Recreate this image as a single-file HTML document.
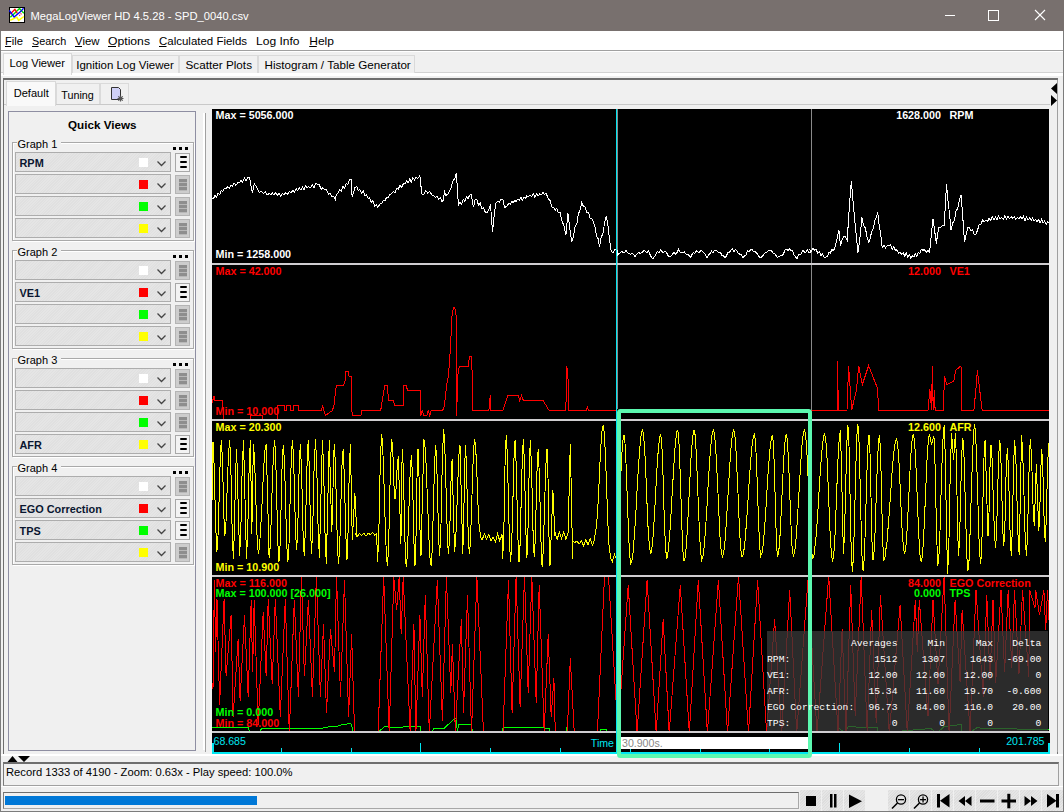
<!DOCTYPE html>
<html><head><meta charset="utf-8">
<style>
*{margin:0;padding:0;box-sizing:border-box}
html,body{width:1064px;height:812px;overflow:hidden;background:#f0f0f0;font-family:"Liberation Sans",sans-serif;font-size:12px;color:#000;position:relative}
.a{position:absolute}
.tab{position:absolute;border:1px solid #d9d9d9;border-bottom:none;background:#f0f0f0}
.gb{position:absolute;left:12px;width:182px;height:99px;border:1px solid #a9a9a9;box-shadow:inset 1px 1px 0 #fff,1px 1px 0 #fff}
.dots{position:absolute;left:160px;top:3px;width:15px;height:3px;background:repeating-linear-gradient(90deg,#000 0 3px,transparent 3px 6px)}
.cb{position:absolute;left:2px;width:156px;height:20px;border:1px solid #adadad;background:#e3e3e3 repeating-linear-gradient(135deg,#e5e5e5 0 1px,#e0e0e0 1px 2px)}
.cb .sq{position:absolute;left:123px;top:5px;width:9px;height:9px}
.cb .ch{position:absolute;left:141px;top:8px;width:9px;height:6px}
.bt{position:absolute;left:162px;width:15px;height:19px;border:1px solid #b4b4b4;background:#cdcdcd}
.bt.on{background:#f3f3f3;border-color:#a8a8a8}
.ln{position:absolute;left:4px;width:7px;height:2px;background:#000;border-radius:1px}
.ln.g{background:#8e8e8e;left:3px;width:8px;height:3px;border-radius:0;box-shadow:0 1px 0 #b8b8b8}
</style></head><body>
<!-- title bar -->
<div class="a" style="left:0;top:0;width:1064px;height:31px;background:#78706e"></div>
<svg class="a" style="left:9px;top:7px" width="16" height="16" viewBox="0 0 16 16">
  <rect x="0.5" y="0.5" width="15" height="15" fill="#fff" stroke="#000"/>
  <polyline points="1.2,13.3 5.9,11.1 7.8,10.3 9.7,13.3 14.9,9.5" fill="none" stroke="#ff0" stroke-width="1.5"/>
  <polyline points="1.3,10.3 5.9,5.9 10.5,1.5 14.9,6.2" fill="none" stroke="#0d0" stroke-width="1.4"/>
  <polyline points="1.3,7 5.9,2.4 8.4,6.5" fill="none" stroke="#f00" stroke-width="1.3"/>
  <polyline points="10.3,8.7 12.7,6.2" fill="none" stroke="#f00" stroke-width="1.2" stroke-dasharray="1 1"/>
  <polyline points="0.3,3.5 5.1,10 11.6,4.6 14.6,1.3" fill="none" stroke="#00f" stroke-width="1.3"/>
</svg>
<svg class="a" style="left:944px;top:9px" width="110" height="13">
  <rect x="1" y="6" width="10" height="1" fill="#fff"/>
  <rect x="44.5" y="1.5" width="10" height="10" fill="none" stroke="#fff"/>
  <line x1="91" y1="1" x2="101" y2="11" stroke="#fff" stroke-width="1.1"/>
  <line x1="101" y1="1" x2="91" y2="11" stroke="#fff" stroke-width="1.1"/>
</svg>
<!-- menu -->
<div class="a" style="left:1px;top:31px;width:1062px;height:19px;background:#fff"></div>
<div class="a" style="left:1px;top:50px;width:1062px;height:1px;background:#a0a0a0"></div>
<div class="a" style="left:1px;top:51px;width:1062px;height:1px;background:#fff"></div>
<!-- main tabs -->
<div class="a" style="left:1px;top:72px;width:1062px;height:1px;background:#d2d2d2"></div><div class="a" style="left:1px;top:73px;width:1062px;height:3px;background:#fff"></div>
<div class="tab" style="left:72px;top:55px;width:107px;height:18px;border-color:#dadada"></div>
<div class="tab" style="left:179px;top:55px;width:79px;height:18px;border-color:#dadada"></div>
<div class="tab" style="left:258px;top:55px;width:157px;height:18px;border-color:#dadada"></div>
<div class="tab" style="left:3px;top:53px;width:69px;height:22px;background:#f9f9f9;border-color:#d9d9d9"></div>
<!-- main panel -->
<div class="a" style="left:3px;top:78px;width:1055px;height:676px;border-top:2px solid #6e6e6e;border-left:1px solid #6e6e6e;border-right:1px solid #7a7a7a"></div>
<!-- sub tabs -->
<div class="tab" style="left:56px;top:83px;width:44px;height:21px;border-color:#dadada"></div>
<div class="tab" style="left:100px;top:83px;width:29px;height:21px;border-color:#dadada"></div>
<div class="a" style="left:4px;top:104px;width:1046px;height:1px;background:#c9c9c9"></div>
<div class="tab" style="left:6px;top:81px;width:50px;height:25px;background:#f9f9f9;border-color:#d9d9d9"></div>
<svg class="a" style="left:110px;top:86px" width="15" height="17" viewBox="0 0 15 17">
  <path d="M1.5 1.5 H8.5 L10.5 3.5 V13.5 H1.5 Z" fill="#cfd0f6" stroke="#333" stroke-width="1"/>
  <path d="M10.5 9.5 V15.5 M7.5 12.5 H13.5 M8.3 10.3 L12.7 14.7 M12.7 10.3 L8.3 14.7" stroke="#555" stroke-width="1.2"/>
  <circle cx="10.5" cy="12.5" r="1.5" fill="#555"/>
</svg>
<!-- left quick views panel -->
<div class="a" style="left:8px;top:111px;width:188px;height:640px;border:1px solid #8e8ea2"></div>
<div class="a" style="left:203px;top:113px;width:2px;height:637px;background:#fff"></div>
<div class="a" style="left:205px;top:113px;width:1px;height:639px;background:#a0a0a0"></div>
<div class="gb" style="top:142px"><div class="a" style="left:4px;top:-6px;width:44px;height:10px;background:#f0f0f0"></div><div class="dots" style="top:4px"></div>
<div class="cb" style="top:9px"><div class="sq" style="background:#fff"></div><svg class="ch" viewBox="0 0 9 6"><polyline points="0.5,0.5 4.5,4.5 8.5,0.5" fill="none" stroke="#444" stroke-width="1.3"/></svg></div>
<div class="bt on" style="top:10px"><div class="ln" style="top:2px"></div><div class="ln" style="top:7px"></div><div class="ln" style="top:12px"></div></div>
<div class="cb" style="top:31px"><div class="sq" style="background:#f00"></div><svg class="ch" viewBox="0 0 9 6"><polyline points="0.5,0.5 4.5,4.5 8.5,0.5" fill="none" stroke="#444" stroke-width="1.3"/></svg></div>
<div class="bt" style="top:32px"><div class="ln g" style="top:3px"></div><div class="ln g" style="top:7px"></div><div class="ln g" style="top:11px"></div></div>
<div class="cb" style="top:53px"><div class="sq" style="background:#0f0"></div><svg class="ch" viewBox="0 0 9 6"><polyline points="0.5,0.5 4.5,4.5 8.5,0.5" fill="none" stroke="#444" stroke-width="1.3"/></svg></div>
<div class="bt" style="top:54px"><div class="ln g" style="top:3px"></div><div class="ln g" style="top:7px"></div><div class="ln g" style="top:11px"></div></div>
<div class="cb" style="top:75px"><div class="sq" style="background:#ff0"></div><svg class="ch" viewBox="0 0 9 6"><polyline points="0.5,0.5 4.5,4.5 8.5,0.5" fill="none" stroke="#444" stroke-width="1.3"/></svg></div>
<div class="bt" style="top:76px"><div class="ln g" style="top:3px"></div><div class="ln g" style="top:7px"></div><div class="ln g" style="top:11px"></div></div>
</div>
<div class="gb" style="top:250px"><div class="a" style="left:4px;top:-6px;width:44px;height:10px;background:#f0f0f0"></div><div class="dots" style="top:4px"></div>
<div class="cb" style="top:9px"><div class="sq" style="background:#fff"></div><svg class="ch" viewBox="0 0 9 6"><polyline points="0.5,0.5 4.5,4.5 8.5,0.5" fill="none" stroke="#444" stroke-width="1.3"/></svg></div>
<div class="bt" style="top:10px"><div class="ln g" style="top:3px"></div><div class="ln g" style="top:7px"></div><div class="ln g" style="top:11px"></div></div>
<div class="cb" style="top:31px"><div class="sq" style="background:#f00"></div><svg class="ch" viewBox="0 0 9 6"><polyline points="0.5,0.5 4.5,4.5 8.5,0.5" fill="none" stroke="#444" stroke-width="1.3"/></svg></div>
<div class="bt on" style="top:32px"><div class="ln" style="top:2px"></div><div class="ln" style="top:7px"></div><div class="ln" style="top:12px"></div></div>
<div class="cb" style="top:53px"><div class="sq" style="background:#0f0"></div><svg class="ch" viewBox="0 0 9 6"><polyline points="0.5,0.5 4.5,4.5 8.5,0.5" fill="none" stroke="#444" stroke-width="1.3"/></svg></div>
<div class="bt" style="top:54px"><div class="ln g" style="top:3px"></div><div class="ln g" style="top:7px"></div><div class="ln g" style="top:11px"></div></div>
<div class="cb" style="top:75px"><div class="sq" style="background:#ff0"></div><svg class="ch" viewBox="0 0 9 6"><polyline points="0.5,0.5 4.5,4.5 8.5,0.5" fill="none" stroke="#444" stroke-width="1.3"/></svg></div>
<div class="bt" style="top:76px"><div class="ln g" style="top:3px"></div><div class="ln g" style="top:7px"></div><div class="ln g" style="top:11px"></div></div>
</div>
<div class="gb" style="top:358px"><div class="a" style="left:4px;top:-6px;width:44px;height:10px;background:#f0f0f0"></div><div class="dots" style="top:4px"></div>
<div class="cb" style="top:9px"><div class="sq" style="background:#fff"></div><svg class="ch" viewBox="0 0 9 6"><polyline points="0.5,0.5 4.5,4.5 8.5,0.5" fill="none" stroke="#444" stroke-width="1.3"/></svg></div>
<div class="bt" style="top:10px"><div class="ln g" style="top:3px"></div><div class="ln g" style="top:7px"></div><div class="ln g" style="top:11px"></div></div>
<div class="cb" style="top:31px"><div class="sq" style="background:#f00"></div><svg class="ch" viewBox="0 0 9 6"><polyline points="0.5,0.5 4.5,4.5 8.5,0.5" fill="none" stroke="#444" stroke-width="1.3"/></svg></div>
<div class="bt" style="top:32px"><div class="ln g" style="top:3px"></div><div class="ln g" style="top:7px"></div><div class="ln g" style="top:11px"></div></div>
<div class="cb" style="top:53px"><div class="sq" style="background:#0f0"></div><svg class="ch" viewBox="0 0 9 6"><polyline points="0.5,0.5 4.5,4.5 8.5,0.5" fill="none" stroke="#444" stroke-width="1.3"/></svg></div>
<div class="bt" style="top:54px"><div class="ln g" style="top:3px"></div><div class="ln g" style="top:7px"></div><div class="ln g" style="top:11px"></div></div>
<div class="cb" style="top:75px"><div class="sq" style="background:#ff0"></div><svg class="ch" viewBox="0 0 9 6"><polyline points="0.5,0.5 4.5,4.5 8.5,0.5" fill="none" stroke="#444" stroke-width="1.3"/></svg></div>
<div class="bt on" style="top:76px"><div class="ln" style="top:2px"></div><div class="ln" style="top:7px"></div><div class="ln" style="top:12px"></div></div>
</div>
<div class="gb" style="top:466px"><div class="a" style="left:4px;top:-6px;width:44px;height:10px;background:#f0f0f0"></div><div class="dots" style="top:4px"></div>
<div class="cb" style="top:9px"><div class="sq" style="background:#fff"></div><svg class="ch" viewBox="0 0 9 6"><polyline points="0.5,0.5 4.5,4.5 8.5,0.5" fill="none" stroke="#444" stroke-width="1.3"/></svg></div>
<div class="bt" style="top:10px"><div class="ln g" style="top:3px"></div><div class="ln g" style="top:7px"></div><div class="ln g" style="top:11px"></div></div>
<div class="cb" style="top:31px"><div class="sq" style="background:#f00"></div><svg class="ch" viewBox="0 0 9 6"><polyline points="0.5,0.5 4.5,4.5 8.5,0.5" fill="none" stroke="#444" stroke-width="1.3"/></svg></div>
<div class="bt on" style="top:32px"><div class="ln" style="top:2px"></div><div class="ln" style="top:7px"></div><div class="ln" style="top:12px"></div></div>
<div class="cb" style="top:53px"><div class="sq" style="background:#0f0"></div><svg class="ch" viewBox="0 0 9 6"><polyline points="0.5,0.5 4.5,4.5 8.5,0.5" fill="none" stroke="#444" stroke-width="1.3"/></svg></div>
<div class="bt on" style="top:54px"><div class="ln" style="top:2px"></div><div class="ln" style="top:7px"></div><div class="ln" style="top:12px"></div></div>
<div class="cb" style="top:75px"><div class="sq" style="background:#ff0"></div><svg class="ch" viewBox="0 0 9 6"><polyline points="0.5,0.5 4.5,4.5 8.5,0.5" fill="none" stroke="#444" stroke-width="1.3"/></svg></div>
<div class="bt" style="top:76px"><div class="ln g" style="top:3px"></div><div class="ln g" style="top:7px"></div><div class="ln g" style="top:11px"></div></div>
</div>
<!-- right arrows -->
<div class="a" style="left:1050px;top:80px;width:8px;height:672px;background:#f0f0f0;border-right:1px solid #a0a0a0"></div>
<svg class="a" style="left:1050px;top:82px" width="8" height="26"><path d="M7 1 V12 L1 6.5 Z M1 13 L7 18.5 L1 24 Z" fill="#000"/></svg>
<!-- status -->
<div class="a" style="left:1px;top:754px;width:1062px;height:2px;background:#fff"></div>
<svg class="a" style="left:6px;top:755px" width="26" height="8"><path d="M1.5 7 L6.5 1 L11.5 7 Z M12 1 H24 L18 7 Z" fill="#000"/></svg>
<div class="a" style="left:3px;top:762px;width:1056px;height:24px;border-top:2px solid #6e6e6e;border-left:1px solid #7a7a7a;border-bottom:1px solid #a0a0a0;border-right:1px solid #a0a0a0"></div>
<div class="a" style="left:1px;top:786px;width:1062px;height:4px;background:#f0f0f0;border-top:1px solid #fff"></div>
<div class="a" style="left:3px;top:792px;width:796px;height:17px;border-top:1px solid #6e6e6e;border-left:1px solid #7a7a7a;border-bottom:1px solid #a8a8a8;border-right:1px solid #a8a8a8"></div>
<div class="a" style="left:5px;top:796px;width:252px;height:9px;background:#0078d7"></div>
<svg class="a" style="left:0;top:0" width="1064" height="812" viewBox="0 0 1064 812">
<defs><clipPath id="c1"><rect x="212" y="109" width="837" height="154"/></clipPath><clipPath id="c2"><rect x="212" y="265" width="837" height="154"/></clipPath><clipPath id="c3"><rect x="212" y="421" width="837" height="154"/></clipPath><clipPath id="c4"><rect x="212" y="577" width="837" height="154"/></clipPath><pattern id="dith" width="2" height="2" patternUnits="userSpaceOnUse"><rect width="2" height="2" fill="#3a3a3a"/><rect width="1" height="1" fill="#2e2e2e"/><rect x="1" y="1" width="1" height="1" fill="#2e2e2e"/></pattern></defs>
<rect x="212" y="109" width="837" height="645" fill="#000"/><rect x="1049" y="733" width="1" height="21" fill="#000"/>
<rect x="811" y="109" width="1" height="310" fill="#8a8a8a"/>
<rect x="617" y="109" width="1" height="300" fill="#8a8a8a"/>
<g clip-path="url(#c1)">
<polyline points="212.0,198.5 213.5,198.6 215.1,195.4 216.6,196.9 218.1,193.3 219.7,194.5 221.2,190.7 222.7,191.5 224.3,188.3 225.8,188.6 227.5,187.0 229.2,188.2 230.9,185.3 232.5,186.0 234.2,183.1 235.9,185.5 237.6,182.7 239.3,182.9 241.0,180.3 242.7,182.2 244.4,177.8 246.1,180.7 247.8,177.2 249.5,177.8 252.4,192.6 254.4,183.7 257.4,188.6 259.4,192.4 261.3,191.2 263.3,193.6 265.3,191.6 267.2,194.7 269.2,193.6 270.8,194.6 272.5,193.1 274.1,195.2 275.8,192.3 277.4,195.3 279.1,193.0 280.7,196.3 282.4,193.6 284.0,195.0 285.8,192.6 287.6,194.0 289.3,191.6 291.1,192.5 292.9,190.6 294.5,191.9 296.1,188.5 297.6,190.5 299.2,187.4 300.8,190.0 302.4,187.1 304.0,189.7 305.5,185.7 307.1,188.0 308.7,186.6 310.5,187.8 312.3,184.4 314.0,187.5 315.8,183.3 317.6,184.7 319.3,184.8 321.1,189.3 322.8,187.5 324.5,189.6 326.5,189.6 328.4,194.1 330.4,193.6 332.0,196.5 333.7,196.1 335.3,199.5 336.3,194.5 337.9,193.6 339.6,189.5 341.2,191.4 342.9,186.4 344.5,188.3 346.2,183.5 347.8,184.7 349.5,179.8 351.1,179.7 352.1,196.5 355.0,187.6 356.7,186.7 358.3,190.3 360.0,189.6 361.6,193.2 363.2,190.7 364.9,195.8 366.5,194.4 368.1,198.4 369.7,197.6 371.3,202.6 372.9,200.4 374.6,206.1 376.2,204.7 377.8,207.4 379.8,204.1 381.7,203.4 383.4,200.1 385.0,200.8 386.6,197.1 388.3,197.8 390.0,194.4 391.6,193.6 393.3,191.4 395.0,192.6 396.7,188.5 398.3,189.0 400.0,185.3 401.7,187.1 403.4,183.7 405.0,183.8 406.6,181.0 408.1,183.1 409.7,178.9 411.3,182.2 412.9,177.6 414.5,180.0 416.0,176.9 417.6,178.7 419.2,176.8 419.9,175.8 421.8,194.0 423.8,194.3 425.8,190.6 427.8,193.2 429.7,191.6 431.7,194.6 433.7,195.9 435.3,197.6 437.0,196.4 438.6,199.2 440.2,197.6 441.9,201.3 443.5,200.5 444.5,189.6 445.5,195.5 447.5,194.6 449.5,191.6 451.2,187.6 452.9,180.9 454.7,178.7 456.4,172.8 458.4,205.0 460.0,202.2 461.6,204.5 463.2,199.3 464.8,201.2 466.4,196.8 468.0,198.8 469.6,195.1 471.2,194.5 473.5,207.4 475.1,199.5 476.8,199.4 478.5,205.2 480.2,203.2 481.9,209.0 483.6,207.8 485.3,212.3 487.0,212.9 488.8,209.5 490.5,204.4 492.5,232.0 494.1,216.1 495.8,203.4 497.6,201.7 499.3,202.2 501.1,199.5 502.8,199.5 504.7,207.4 506.7,206.3 508.7,203.4 510.2,204.1 511.7,201.6 513.2,202.5 514.8,200.4 516.3,201.6 517.8,199.0 519.3,200.4 520.8,197.1 522.3,200.2 523.9,197.2 525.4,198.6 526.9,195.8 528.4,196.5 530.0,195.0 531.6,196.7 533.3,193.6 534.9,197.5 536.5,193.6 538.1,196.1 539.7,193.6 541.3,194.9 543.0,192.6 544.6,194.6 546.2,193.2 548.2,198.8 550.1,200.5 552.1,207.4 553.7,207.5 555.3,210.1 556.8,208.2 558.4,212.8 560.0,212.3 562.0,220.8 563.9,225.9 565.9,235.0 567.9,213.3 569.8,228.3 571.8,241.9 573.4,236.8 575.1,226.6 576.8,224.1 578.4,213.8 580.1,210.0 581.7,202.4 583.4,206.5 585.1,207.1 586.8,212.7 588.4,212.2 590.1,218.4 591.8,218.2 593.5,222.2 595.0,227.3 596.5,236.4 598.0,238.5 599.5,246.8 601.2,237.2 603.0,233.4 604.7,221.9 606.4,216.2 608.0,226.3 609.7,240.9 611.3,251.8 613.2,252.7 615.1,249.4 617.0,250.0 617.0,255.6 618.5,253.8 620.0,253.1 621.5,251.6 623.0,252.2 624.5,252.6 626.0,250.3 627.5,252.5 629.0,253.4 630.5,254.4 632.0,253.5 633.5,254.6 635.0,256.4 636.5,254.5 638.0,252.8 639.5,253.0 641.0,253.0 642.5,252.1 644.0,250.4 645.5,251.4 647.0,252.6 648.5,250.9 650.0,254.6 651.5,257.3 653.0,258.6 654.5,256.7 656.0,253.9 657.5,251.3 659.0,252.6 660.5,250.1 662.0,251.7 663.5,252.6 665.0,251.0 666.5,252.2 668.0,255.8 669.5,256.6 671.0,256.2 672.5,254.2 674.0,252.6 675.5,254.2 677.0,252.7 678.5,249.3 680.0,251.8 681.5,252.7 683.0,252.1 684.5,252.0 686.0,254.2 687.5,254.2 689.0,255.6 690.5,257.6 692.0,254.6 693.5,252.7 695.0,253.2 696.5,250.5 698.0,252.0 699.5,252.0 701.0,250.3 702.5,251.6 704.0,253.2 705.5,254.7 707.0,257.8 708.5,254.7 710.0,253.7 711.5,251.1 713.0,253.1 714.5,250.2 716.0,250.3 717.5,251.1 719.0,253.1 720.5,252.2 722.0,255.7 723.5,255.7 725.0,257.6 726.5,255.8 728.0,252.1 729.5,252.3 731.0,250.2 732.5,248.8 734.0,251.7 735.5,249.4 737.0,251.3 738.5,253.5 740.0,254.2 741.5,255.0 743.0,257.6 744.5,255.9 746.0,255.1 747.5,251.0 749.0,251.7 750.5,249.7 752.0,249.6 753.5,251.8 755.0,251.5 756.5,252.8 758.0,255.0 759.5,257.3 761.0,257.3 762.5,256.1 764.0,254.0 765.5,252.6 767.0,252.2 768.5,250.5 770.0,250.6 771.5,250.7 773.0,253.2 774.5,253.3 776.0,255.5 777.5,257.5 779.0,256.5 780.5,255.9 782.0,255.8 783.5,253.9 785.0,250.0 786.5,249.2 788.0,250.3 789.5,249.0 791.0,250.4 792.5,250.8 794.0,254.7 795.5,256.8 797.0,259.1 798.5,254.3 800.0,254.9 801.5,253.2 803.0,250.0 804.5,252.3 806.0,252.4 807.5,249.6 809.0,253.2 810.5,252.1 810.0,250.2 811.5,251.6 813.0,248.0 814.5,250.2 816.1,249.2 817.7,253.1 819.3,251.8 821.0,255.5 822.6,253.9 824.2,257.0 825.8,257.0 827.3,256.7 828.8,252.2 830.3,253.2 831.8,249.5 833.3,250.8 834.8,248.0 836.8,239.7 838.9,230.0 840.5,245.7 842.1,240.0 843.8,236.7 845.5,236.7 847.2,240.0 849.2,209.3 851.3,181.4 854.0,211.9 856.0,233.0 858.0,252.5 860.0,237.2 861.9,217.5 863.6,225.6 865.3,227.7 867.0,236.9 868.7,242.3 870.2,238.3 871.7,231.4 873.2,229.0 874.7,221.0 876.2,217.8 877.7,211.9 879.2,225.2 880.7,233.9 882.2,248.0 883.9,245.5 885.6,247.9 887.3,245.4 889.0,245.7 890.6,244.6 892.2,249.2 893.8,246.9 895.4,250.4 897.0,249.8 898.6,253.2 900.2,252.5 901.7,254.3 903.2,252.7 904.7,256.1 906.2,252.9 907.8,256.9 909.3,254.7 910.8,258.0 912.3,255.7 913.8,257.0 915.3,253.9 916.8,256.1 918.3,252.4 919.8,254.0 921.3,249.2 922.8,250.2 924.5,249.7 926.2,252.2 927.9,250.5 929.6,252.5 931.3,234.6 933.0,218.7 934.6,230.3 936.3,243.5 938.6,227.7 940.5,227.8 942.3,225.4 944.2,225.4 946.5,184.4 948.0,200.6 949.5,213.7 951.0,230.0 952.7,223.0 954.4,220.2 956.0,211.4 957.7,208.1 959.4,199.9 961.1,195.0 962.8,217.5 964.5,242.3 966.2,234.3 967.9,227.7 969.5,228.0 971.1,231.1 972.6,229.9 974.2,234.6 975.8,234.4 977.5,230.3 979.2,224.3 980.9,224.6 982.6,220.0 984.3,221.7 986.0,219.8 987.6,221.5 989.1,218.0 990.7,220.5 992.3,216.9 993.9,219.9 995.4,217.0 997.0,219.9 998.6,215.8 1000.1,218.9 1001.7,217.5 1003.3,219.4 1004.9,215.8 1006.4,219.1 1008.0,216.2 1009.6,218.7 1011.2,216.8 1012.8,218.4 1014.3,216.7 1015.9,219.3 1017.5,217.5 1019.0,218.7 1020.5,217.0 1022.0,218.9 1023.5,216.3 1025.0,220.5 1026.5,217.0 1028.1,219.9 1029.6,218.0 1031.1,220.3 1032.6,218.0 1034.1,220.5 1035.6,219.8 1037.1,221.5 1038.6,219.5 1040.1,223.1 1041.6,219.2 1043.1,223.2 1044.6,221.0 1046.1,224.6 1047.6,221.7 1049.1,223.2" stroke="#fff" stroke-width="1" fill="none" shape-rendering="crispEdges"/>
</g>
<g clip-path="url(#c2)">
<polyline points="211.0,405.6 214.3,395.7 214.9,400.7 222.8,400.7 222.8,404.0 224.0,421.0 250.0,421.0 250.0,415.5 262.0,415.5 262.0,421.0 277.1,421.0 277.1,405.3 284.0,405.3 284.0,410.5 286.0,410.5 286.0,405.3 290.0,405.3 290.0,410.5 293.0,410.5 293.0,405.3 298.8,405.3 298.8,410.5 321.5,410.5 322.5,405.6 325.5,415.5 332.4,410.5 333.9,405.6 336.3,385.8 343.2,385.8 345.2,380.9 345.8,371.4 348.2,371.4 349.1,376.6 351.1,376.6 352.1,415.5 361.0,415.5 362.0,410.5 380.7,410.5 384.7,385.8 387.2,385.8 388.6,400.3 393.5,400.3 394.5,405.2 403.4,405.2 404.0,385.5 406.4,385.5 407.4,390.4 420.3,390.4 420.9,415.5 422.2,410.5 423.8,415.5 426.8,415.5 428.2,410.5 429.7,415.5 431.3,410.5 442.6,410.5 444.5,405.6 446.5,385.8 448.5,375.0 450.5,347.4 451.8,317.8 453.4,307.5 454.8,307.5 456.4,317.8 456.6,415.5 457.8,375.0 459.3,366.1 468.2,366.1 469.6,356.2 471.6,356.2 472.4,382.9 472.8,410.5 488.9,410.5 490.3,395.1 490.9,410.5 502.8,410.5 507.7,395.7 518.5,395.7 519.5,400.7 521.5,395.7 523.5,400.7 543.2,400.7 549.1,410.5 565.9,410.5 566.5,366.1 567.9,371.0 568.5,410.5 586.6,410.5 587.6,405.6 588.2,410.5 616.2,410.5" stroke="#f00" stroke-width="1" fill="none" shape-rendering="crispEdges"/>
<polyline points="811.3,410.0 837.1,410.0 837.6,361.1 838.3,410.0 847.0,410.0 848.6,365.8 851.7,410.0 856.4,390.5 858.7,365.8 862.3,384.6 868.6,365.8 877.5,388.2 878.7,410.0 928.0,410.0 929.9,389.3 931.6,410.0 932.3,365.8 933.2,410.0 934.4,390.5 935.1,410.0 943.3,410.0 944.5,376.4 946.9,384.6 953.9,381.1 955.5,370.5 961.0,365.8 961.7,410.0 973.9,410.0 975.8,390.5 977.4,370.5 982.1,410.0 1050.0,410.0" stroke="#f00" stroke-width="1" fill="none" shape-rendering="crispEdges"/>
</g>
<g clip-path="url(#c3)">
<polyline points="212.0,500.8 213.0,441.7 214.3,469.3 215.6,524.4 216.9,552.0 218.0,535.6 219.2,495.9 220.3,456.1 221.4,439.7 222.6,463.8 223.7,512.1 224.8,536.3 226.0,522.1 227.2,488.0 228.5,453.8 229.7,439.7 230.9,469.5 232.1,528.4 233.3,558.9 234.4,531.3 235.5,476.2 236.6,448.6 238.1,502.3 239.6,556.0 240.9,526.9 242.2,468.8 243.5,439.7 245.0,499.3 246.5,558.9 247.8,529.1 249.1,469.5 250.4,439.7 251.8,534.3 253.4,443.6 254.6,459.8 255.8,498.8 257.1,537.8 258.3,554.0 259.4,548.5 260.5,530.7 261.7,511.1 262.8,486.5 263.9,464.4 265.1,449.1 266.2,443.6 267.7,500.8 269.1,558.0 270.2,546.7 271.3,517.1 272.4,480.5 273.6,451.0 274.7,439.7 275.7,457.6 276.8,500.8 277.9,544.0 279.0,561.9 280.1,544.7 281.2,503.3 282.2,461.8 283.3,444.6 284.5,461.8 285.6,503.3 286.7,544.7 287.9,561.9 289.0,544.0 290.1,500.8 291.3,457.6 292.4,439.7 293.5,455.8 294.6,494.9 295.6,533.9 296.7,550.1 297.9,523.5 299.1,470.2 300.3,443.6 301.6,471.7 302.9,527.9 304.2,556.0 305.5,526.9 306.9,468.8 308.2,439.7 309.3,468.3 310.4,525.4 311.5,554.0 312.8,525.2 314.1,467.5 315.5,438.7 316.8,468.5 318.1,527.6 319.4,558.0 320.9,498.8 322.4,439.7 323.7,470.7 325.0,532.7 326.3,563.9 327.8,501.8 329.3,439.7 330.5,486.0 331.8,532.3 333.0,488.0 334.2,443.6 335.3,461.2 336.4,503.7 337.4,546.3 338.5,563.9 339.7,547.1 340.8,506.7 341.9,466.3 343.1,449.5 344.4,477.1 345.7,532.3 347.0,559.9 348.1,530.9 349.2,472.7 350.4,443.6 352.3,540.2 353.6,516.6 354.9,492.9 356.9,536.3 355.0,532.7 357.2,536.5 359.4,533.5 361.6,535.6 363.8,533.1 366.0,536.1 368.2,533.3 370.4,534.6 372.6,532.3 374.8,535.4 376.6,534.0 377.6,562.0 378.9,530.0 380.2,466.0 381.5,434.0 382.5,442.8 383.5,467.0 384.5,500.0 385.5,533.4 386.5,557.2 387.5,566.0 388.6,547.4 389.6,502.5 390.7,457.6 391.8,439.0 392.9,454.0 393.9,484.0 395.0,499.0 396.1,488.2 397.2,466.8 398.3,456.0 399.6,500.0 400.9,544.0 402.2,449.0 403.2,466.3 404.2,508.0 405.2,549.7 406.2,567.0 407.3,556.3 408.3,528.5 409.4,493.7 410.4,465.7 411.5,455.0 412.7,482.8 413.8,539.5 415.0,566.0 416.0,536.8 417.0,478.2 418.0,449.0 419.0,475.8 420.0,530.0 421.0,556.0 422.4,497.5 423.9,439.0 424.9,445.3 426.0,462.9 427.0,488.4 428.1,516.6 429.1,542.1 430.2,560.8 431.2,566.0 432.3,548.3 433.4,505.5 434.6,462.7 435.7,445.0 436.7,461.3 437.7,500.5 438.7,539.7 439.7,556.0 441.0,524.2 442.3,460.8 443.6,429.0 444.6,440.9 445.6,472.2 446.6,510.8 447.6,544.0 448.6,554.0 449.8,530.2 450.9,482.8 452.1,459.0 453.3,505.5 454.5,552.0 455.6,541.8 456.7,515.0 457.8,482.0 458.9,455.2 460.0,445.0 461.4,499.5 462.8,554.0 464.1,499.5 465.3,445.0 466.3,461.0 467.3,499.5 468.3,538.0 469.3,554.0 470.4,543.0 471.4,514.3 472.5,478.7 473.5,450.0 474.6,439.0 475.7,447.9 476.8,471.1 477.8,499.9 478.9,523.1 480.0,532.0 480.0,535.9 482.2,539.8 484.4,533.6 486.6,539.1 488.8,534.6 491.0,541.1 493.2,537.3 495.4,541.8 497.6,533.9 499.8,541.0 502.0,534.6 502.7,559.0 503.9,528.0 505.0,466.0 506.2,435.0 507.3,453.6 508.4,498.5 509.5,543.4 510.6,562.0 511.7,544.1 512.9,501.0 514.0,457.9 515.1,440.0 516.4,470.5 517.7,533.1 519.0,562.0 520.1,544.0 521.2,500.5 522.3,457.0 523.4,439.0 524.6,468.8 525.7,526.4 526.9,558.0 528.0,528.5 529.2,469.5 530.3,440.0 531.6,469.2 532.9,527.8 534.2,557.0 535.2,541.2 536.2,503.0 537.2,464.8 538.2,449.0 539.5,478.5 540.8,537.6 542.1,567.0 543.3,549.7 544.5,508.0 545.8,466.3 547.0,449.0 548.0,478.2 549.0,536.8 550.0,566.0 551.5,528.0 552.9,490.0 553.9,513.0 554.9,536.0 554.9,532.2 557.1,539.7 559.3,532.2 561.5,538.8 563.7,531.9 565.9,539.2 568.1,532.7 570.3,443.6 571.5,501.3 572.6,559.0 572.6,540.6 574.8,542.6 577.0,541.0 579.2,543.9 581.4,541.1 583.6,545.8 585.8,539.3 588.0,545.0 590.2,539.0 592.4,545.2 594.6,539.5 595.3,532.3 596.4,527.0 597.6,512.1 598.7,490.5 599.8,466.7 600.9,445.1 602.1,430.2 603.2,424.9 604.4,433.5 605.5,457.2 606.7,489.4 607.8,521.7 609.0,545.4 610.1,554.0 610.1,557.5 612.3,561.7 614.5,554.5 616.0,558.0 617.1,551.9 618.3,534.8 619.4,510.1 620.5,482.6 621.6,457.9 622.8,440.8 623.9,434.7 625.0,443.3 626.2,467.0 627.3,499.2 628.5,531.7 629.6,555.2 630.8,563.8 631.9,561.1 632.9,554.0 634.0,540.7 635.1,524.6 636.2,506.3 637.2,487.3 638.3,469.0 639.4,452.9 640.5,440.4 641.5,432.5 642.6,429.8 643.7,435.9 644.9,453.2 646.0,478.1 647.1,505.7 648.2,530.6 649.4,545.7 650.5,554.0 651.5,551.1 652.5,543.7 653.6,529.2 654.6,512.5 655.6,493.9 656.6,475.3 657.6,458.6 658.7,445.3 659.7,436.7 660.7,433.8 661.9,445.7 663.1,477.0 664.2,515.7 665.4,545.7 666.6,558.9 667.6,556.3 668.6,546.5 669.6,536.6 670.6,521.2 671.6,503.5 672.7,485.2 673.7,467.5 674.7,452.1 675.7,440.0 676.7,432.4 677.7,429.8 678.8,438.6 679.8,462.6 680.9,495.3 681.9,527.0 683.0,552.1 684.0,560.9 685.0,557.7 686.0,549.5 687.1,533.9 688.1,515.6 689.1,495.4 690.1,475.1 691.1,456.8 692.2,442.3 693.2,433.0 694.2,429.8 695.3,436.2 696.3,454.3 697.4,480.4 698.5,509.3 699.6,535.4 700.6,552.0 701.7,559.9 702.8,557.3 703.8,550.8 704.9,537.4 706.0,521.9 707.1,504.1 708.1,485.6 709.2,467.8 710.3,452.3 711.4,440.1 712.4,432.4 713.5,429.8 714.6,434.6 715.7,448.4 716.8,469.0 718.0,493.3 719.1,517.7 720.2,540.7 721.3,552.1 722.4,556.9 723.4,554.3 724.5,546.8 725.5,535.0 726.5,519.7 727.6,502.4 728.6,484.3 729.7,467.0 730.7,451.7 731.7,439.9 732.8,432.4 733.8,429.8 734.8,434.6 735.9,448.4 736.9,469.0 738.0,493.3 739.0,517.7 740.0,537.7 741.1,552.1 742.1,556.9 743.1,554.8 744.2,548.5 745.2,538.9 746.2,526.1 747.3,511.3 748.3,495.4 749.3,479.4 750.4,464.6 751.4,451.8 752.4,442.0 753.5,435.9 754.5,433.8 755.5,442.0 756.6,464.3 757.6,494.8 758.7,525.4 759.8,547.7 760.8,555.9 761.9,553.4 762.9,547.2 764.0,535.0 765.1,520.5 766.2,503.9 767.2,486.7 768.3,470.1 769.4,455.6 770.5,444.3 771.5,437.2 772.6,434.7 773.6,446.4 774.6,476.9 775.6,514.7 776.6,546.6 777.6,556.9 778.7,552.2 779.8,539.5 780.9,518.9 782.0,495.4 783.1,471.8 784.2,451.8 785.3,438.5 786.4,433.8 787.5,442.0 788.7,464.3 789.8,494.8 791.0,525.4 792.1,547.7 793.3,555.9 794.3,553.3 795.4,546.6 796.4,534.1 797.4,519.0 798.4,501.8 799.5,483.9 800.5,466.7 801.5,451.6 802.5,439.8 803.6,432.4 804.6,429.8 805.6,434.7 806.7,448.6 807.7,469.3 808.8,493.8 809.8,518.4 810.8,537.0 811.9,553.0 812.9,557.9 814.0,555.4 815.0,546.3 816.1,536.5 817.2,521.6 818.3,504.7 819.3,487.0 820.4,470.1 821.5,455.2 822.6,443.7 823.6,436.3 824.7,433.8 825.8,440.1 827.0,457.9 828.1,483.6 829.2,512.0 830.3,537.7 831.5,554.2 832.6,561.8 833.7,555.3 834.9,538.2 836.0,510.5 837.1,481.1 838.2,454.6 839.4,436.3 840.5,429.8 842.0,491.8 843.4,553.9 844.5,535.0 845.6,489.4 846.8,443.8 847.9,424.9 849.0,446.4 850.1,498.2 851.2,550.1 852.3,571.6 853.4,557.5 854.5,520.6 855.6,474.9 856.7,438.0 857.8,423.9 858.9,437.9 859.9,474.6 861.0,520.0 862.0,555.7 863.1,570.7 864.3,557.7 865.5,523.7 866.6,481.7 867.8,447.7 869.0,434.7 870.0,453.0 871.0,497.2 872.0,541.5 873.0,559.8 874.1,551.4 875.2,528.9 876.2,497.2 877.3,466.0 878.4,443.1 879.5,434.7 880.6,453.0 881.6,497.2 882.7,541.5 883.8,559.8 884.9,557.7 885.9,549.3 887.0,542.1 888.1,527.3 889.1,514.9 890.2,499.2 891.3,483.6 892.3,469.0 893.4,456.4 894.5,446.8 895.5,440.8 896.6,438.7 897.7,444.4 898.9,460.4 900.0,483.5 901.1,509.1 902.2,532.2 903.4,547.0 904.5,553.9 905.6,549.3 906.7,537.2 907.8,516.8 908.9,493.9 910.0,470.9 911.1,451.4 912.2,438.4 913.3,433.8 914.4,440.1 915.6,457.9 916.7,483.6 917.8,512.0 918.9,537.7 920.1,556.4 921.2,561.8 922.2,556.9 923.3,543.9 924.3,522.3 925.4,497.8 926.4,473.3 927.4,452.5 928.5,438.7 929.5,433.8 930.5,439.4 931.5,445.0 932.7,440.4 933.9,435.7 935.2,468.2 936.5,532.2 937.8,565.7 938.9,556.3 940.0,530.6 941.0,495.3 942.1,460.1 943.2,434.3 944.3,424.9 945.4,462.1 946.6,536.2 947.7,573.6 949.0,538.4 950.3,468.0 951.6,432.8 953.5,460.0 954.5,446.4 955.5,432.8 956.5,463.6 957.5,525.1 958.5,555.9 959.6,538.6 960.6,496.8 961.7,455.0 962.8,437.7 963.8,450.4 964.8,483.7 965.9,524.7 966.9,557.8 967.9,570.7 969.0,560.9 970.1,532.1 971.2,497.3 972.4,460.6 973.5,433.7 974.6,423.9 975.6,433.3 976.6,458.9 977.7,493.8 978.7,530.8 979.7,554.4 980.7,563.8 981.8,545.6 982.9,501.8 984.0,457.9 985.1,439.7 986.5,487.9 988.0,536.2 989.0,513.3 990.0,467.5 991.0,444.6 992.1,459.7 993.2,496.3 994.4,532.9 995.5,548.0 996.6,532.1 997.6,493.9 998.7,455.6 999.8,439.7 1000.8,455.3 1001.8,492.8 1002.8,530.4 1003.8,546.0 1005.0,521.6 1006.1,472.9 1007.3,448.5 1008.3,464.2 1009.3,502.2 1010.3,540.2 1011.3,555.9 1012.4,526.9 1013.5,468.8 1014.6,439.7 1015.8,456.6 1016.9,497.3 1018.1,538.0 1019.2,554.9 1020.4,494.8 1021.5,434.7 1022.7,452.4 1024.0,495.3 1025.2,538.2 1026.4,555.9 1027.4,538.7 1028.4,497.3 1029.4,455.9 1030.4,438.7 1031.7,460.6 1033.0,504.4 1034.3,526.3 1035.3,495.3 1036.3,464.3 1037.5,497.8 1038.8,531.3 1039.8,510.8 1040.8,469.9 1041.8,449.5 1042.9,472.6 1044.1,519.0 1045.2,542.1 1046.4,517.2 1047.5,467.5 1048.7,442.6" stroke="#ff0" stroke-width="1" fill="none" shape-rendering="crispEdges"/>
</g>
<g clip-path="url(#c4)">
<polyline points="211.0,727.6 248.2,727.6 250.2,733.0 258.2,733.0 262.2,728.2 322.4,728.2 330.5,726.6 336.5,726.6 342.5,724.6 350.6,723.6 351.6,724.6 353.0,733.0 377.1,733.0 385.1,726.2 389.2,727.0 403.2,727.0 404.2,726.2 420.3,726.2 420.7,733.0 430.3,733.0 434.3,728.2 444.4,728.2 454.4,718.6 456.4,718.6 457.4,733.0 458.4,724.6 471.5,724.6 472.5,733.0 502.0,733.0 503.0,728.2 508.1,727.0 543.2,727.0 545.2,728.2 549.2,728.2 549.8,733.0 566.3,733.0 566.3,727.6 567.9,733.0 600.0,733.0 600.4,729.2 606.0,729.2 606.9,733.0 837.1,733.0 838.1,727.5 845.1,733.0 848.1,726.5 853.1,726.5 858.2,727.5 877.2,727.5 878.2,733.0 931.0,728.5 937.0,733.0 944.1,726.5 961.1,724.5 962.1,733.0 969.1,733.0 977.2,727.5 983.2,728.5 1049.4,729.5" stroke="#0f0" stroke-width="1" fill="none" shape-rendering="crispEdges"/>
<polyline points="211.6,680.4 213.0,688.5 214.4,580.0 215.6,652.3 217.0,599.1 219.6,704.5 224.1,599.1 226.1,676.4 231.1,615.2 233.1,716.6 238.1,639.3 240.1,700.5 244.5,615.2 248.2,696.5 251.2,600.1 252.6,672.4 254.2,600.1 258.2,724.6 263.2,612.2 266.2,676.4 268.2,599.1 272.2,684.4 275.3,599.1 280.3,716.6 285.3,599.1 289.3,733.0 294.3,600.1 298.4,696.5 301.4,576.0 304.4,676.4 308.4,600.1 312.4,696.5 316.4,577.0 320.4,696.5 323.5,624.2 326.5,712.6 330.5,629.2 334.5,672.4 336.5,576.0 340.5,696.5 344.5,580.0 348.6,716.6 351.6,634.2 354.6,733.0 355.0,733.0 378.1,733.0 383.7,577.0 389.2,733.0 393.8,577.0 396.6,610.2 399.2,577.0 401.2,634.2 403.2,577.0 410.2,733.0 413.9,624.2 415.9,733.0 419.9,615.2 422.3,696.5 425.3,595.1 429.3,733.0 437.3,580.0 442.4,720.6 446.4,577.0 450.8,692.5 452.4,644.3 455.4,733.0 458.4,672.4 461.4,619.2 463.5,712.6 467.5,595.1 471.5,733.0 476.9,577.0 483.5,733.0 503.0,733.0 508.5,580.0 512.1,712.6 516.1,576.0 520.1,706.5 524.5,576.0 528.2,692.5 531.8,576.0 536.2,702.5 539.2,585.0 544.2,733.0 548.2,634.2 551.2,716.6 553.9,678.4 555.3,733.0 567.3,733.0 570.3,658.3 574.3,733.0 597.4,733.0 604.5,576.0 608.5,576.0 618.0,733.0 628.2,585.0 637.1,733.0 647.1,580.0 656.2,733.0 663.2,619.2 669.2,733.0 680.3,585.0 689.3,733.0 698.3,580.0 707.4,733.0 718.4,580.0 727.5,733.0 738.5,576.0 748.5,733.0 757.6,580.0 766.6,733.0 774.6,619.2 781.7,733.0 789.7,590.0 796.7,733.0 808.0,580.0 817.0,733.0 828.7,576.0 838.1,733.0 842.1,629.2 846.1,733.0 850.7,585.0 855.2,716.4 861.2,576.0 867.2,733.0 871.6,610.1 876.2,722.5 880.4,595.1 889.3,733.0 900.1,605.1 907.3,733.0 915.3,600.1 917.3,652.0 919.3,600.1 928.0,716.4 933.0,600.1 938.0,684.3 944.1,576.0 949.1,733.0 955.1,600.1 960.1,682.3 962.1,610.1 970.1,733.0 976.0,590.0 983.2,697.0 986.8,595.0 990.0,680.0 993.0,600.0 995.7,683.0 1001.0,590.0 1004.6,672.0 1008.2,590.0 1011.8,668.0 1014.5,590.0 1019.0,674.0 1022.5,590.0 1028.8,677.0 1029.6,590.0 1035.0,608.0 1035.7,590.0 1039.5,615.0 1043.9,590.0 1045.7,630.0 1047.5,590.0 1049.0,620.0" stroke="#f00" stroke-width="1" fill="none" shape-rendering="crispEdges"/>
</g>
<rect x="212" y="263" width="837" height="2" fill="#cfcdd0"/>
<rect x="212" y="419" width="837" height="2" fill="#cfcdd0"/>
<rect x="212" y="575" width="837" height="2" fill="#cfcdd0"/>
<rect x="212" y="731" width="837" height="2" fill="#cfcdd0"/>
<rect x="767" y="631" width="281" height="100" fill="#373737" fill-opacity="0.78"/>
<rect x="616" y="109" width="1" height="645" fill="#00e5f0"/>
<rect x="212" y="752" width="838" height="2" fill="#00e5f0"/>
<rect x="212" y="743" width="2" height="10" fill="#00e5f0"/>
<rect x="1048" y="743" width="2" height="10" fill="#00e5f0"/>
<rect x="281" y="748" width="1" height="5" fill="#00e5f0"/>
<rect x="351" y="748" width="1" height="5" fill="#00e5f0"/>
<rect x="420" y="743" width="1" height="10" fill="#00e5f0"/>
<rect x="490" y="748" width="1" height="5" fill="#00e5f0"/>
<rect x="560" y="748" width="1" height="5" fill="#00e5f0"/>
<rect x="630" y="748" width="1" height="5" fill="#00e5f0"/>
<rect x="700" y="748" width="1" height="5" fill="#00e5f0"/>
<rect x="769" y="748" width="1" height="5" fill="#00e5f0"/>
<rect x="839" y="743" width="1" height="10" fill="#00e5f0"/>
<rect x="909" y="748" width="1" height="5" fill="#00e5f0"/>
<rect x="979" y="748" width="1" height="5" fill="#00e5f0"/>
<rect x="621" y="737" width="188" height="12" fill="#fff"/>
<rect x="619" y="411" width="191" height="345" rx="1.5" fill="none" stroke="#5cf8b0" stroke-width="4"/>
</svg>
<svg class="a" style="left:0;top:0" width="1064" height="812" font-family="Liberation Sans">
<text x="215.5" y="119" fill="#fff" font-size="10.75" font-weight="bold" text-anchor="start">Max = 5056.000</text>
<text x="215.5" y="258" fill="#fff" font-size="10.75" font-weight="bold" text-anchor="start">Min = 1258.000</text>
<text x="941" y="119" fill="#fff" font-size="10.75" font-weight="bold" text-anchor="end">1628.000</text>
<text x="949.5" y="119" fill="#fff" font-size="10.75" font-weight="bold" text-anchor="start">RPM</text>
<text x="215.5" y="275" fill="#f00" font-size="10.75" font-weight="bold" text-anchor="start">Max = 42.000</text>
<text x="215.5" y="414.5" fill="#f00" font-size="10.75" font-weight="bold" text-anchor="start">Min = 10.000</text>
<text x="941" y="275" fill="#f00" font-size="10.75" font-weight="bold" text-anchor="end">12.000</text>
<text x="949.5" y="275" fill="#f00" font-size="10.75" font-weight="bold" text-anchor="start">VE1</text>
<text x="215.5" y="431" fill="#ff0" font-size="10.75" font-weight="bold" text-anchor="start">Max = 20.300</text>
<text x="215.5" y="570.7" fill="#ff0" font-size="10.75" font-weight="bold" text-anchor="start">Min = 10.900</text>
<text x="941" y="431" fill="#ff0" font-size="10.75" font-weight="bold" text-anchor="end">12.600</text>
<text x="949.5" y="431" fill="#ff0" font-size="10.75" font-weight="bold" text-anchor="start">AFR</text>
<text x="215.5" y="586.7" fill="#f00" font-size="10.75" font-weight="bold" text-anchor="start">Max = 116.000</text>
<text x="215.5" y="597.2" fill="#0f0" font-size="10.75" font-weight="bold" text-anchor="start">Max = 100.000 [26.000]</text>
<text x="215.5" y="715.6" fill="#0f0" font-size="10.75" font-weight="bold" text-anchor="start">Min = 0.000</text>
<text x="215.5" y="726.6" fill="#f00" font-size="10.75" font-weight="bold" text-anchor="start">Min = 84.000</text>
<text x="941" y="586.7" fill="#f00" font-size="10.75" font-weight="bold" text-anchor="end">84.000</text>
<text x="949.5" y="586.7" fill="#f00" font-size="10.75" font-weight="bold" text-anchor="start">EGO Correction</text>
<text x="941" y="597.2" fill="#0f0" font-size="10.75" font-weight="bold" text-anchor="end">0.000</text>
<text x="949.5" y="597.2" fill="#0f0" font-size="10.75" font-weight="bold" text-anchor="start">TPS</text>
<text x="213.5" y="745" fill="#00e5f0" font-size="10.6" font-weight="normal" text-anchor="start">68.685</text>
<text x="1044.5" y="745" fill="#00e5f0" font-size="10.6" font-weight="normal" text-anchor="end">201.785</text>
<text x="614" y="747" fill="#00e5f0" font-size="10.6" font-weight="normal" text-anchor="end">Time</text>
<text x="622" y="747" fill="#888" font-size="10.6" font-weight="normal" text-anchor="start">30.900s.</text>
<text x="897.5" y="646" font-family="Liberation Mono" font-size="9.7" fill="#fff" text-anchor="end">Averages</text>
<text x="945" y="646" font-family="Liberation Mono" font-size="9.7" fill="#fff" text-anchor="end">Min</text>
<text x="993.2" y="646" font-family="Liberation Mono" font-size="9.7" fill="#fff" text-anchor="end">Max</text>
<text x="1041.3" y="646" font-family="Liberation Mono" font-size="9.7" fill="#fff" text-anchor="end">Delta</text>
<text x="767" y="662" font-family="Liberation Mono" font-size="9.7" fill="#fff">RPM:</text>
<text x="897.5" y="662" font-family="Liberation Mono" font-size="9.7" fill="#fff" text-anchor="end">1512</text>
<text x="945" y="662" font-family="Liberation Mono" font-size="9.7" fill="#fff" text-anchor="end">1307</text>
<text x="993.2" y="662" font-family="Liberation Mono" font-size="9.7" fill="#fff" text-anchor="end">1643</text>
<text x="1041.3" y="662" font-family="Liberation Mono" font-size="9.7" fill="#fff" text-anchor="end">-69.00</text>
<text x="767" y="678" font-family="Liberation Mono" font-size="9.7" fill="#fff">VE1:</text>
<text x="897.5" y="678" font-family="Liberation Mono" font-size="9.7" fill="#fff" text-anchor="end">12.00</text>
<text x="945" y="678" font-family="Liberation Mono" font-size="9.7" fill="#fff" text-anchor="end">12.00</text>
<text x="993.2" y="678" font-family="Liberation Mono" font-size="9.7" fill="#fff" text-anchor="end">12.00</text>
<text x="1041.3" y="678" font-family="Liberation Mono" font-size="9.7" fill="#fff" text-anchor="end">0</text>
<text x="767" y="694" font-family="Liberation Mono" font-size="9.7" fill="#fff">AFR:</text>
<text x="897.5" y="694" font-family="Liberation Mono" font-size="9.7" fill="#fff" text-anchor="end">15.34</text>
<text x="945" y="694" font-family="Liberation Mono" font-size="9.7" fill="#fff" text-anchor="end">11.60</text>
<text x="993.2" y="694" font-family="Liberation Mono" font-size="9.7" fill="#fff" text-anchor="end">19.70</text>
<text x="1041.3" y="694" font-family="Liberation Mono" font-size="9.7" fill="#fff" text-anchor="end">-0.600</text>
<text x="767" y="710" font-family="Liberation Mono" font-size="9.7" fill="#fff">EGO Correction:</text>
<text x="897.5" y="710" font-family="Liberation Mono" font-size="9.7" fill="#fff" text-anchor="end">96.73</text>
<text x="945" y="710" font-family="Liberation Mono" font-size="9.7" fill="#fff" text-anchor="end">84.00</text>
<text x="993.2" y="710" font-family="Liberation Mono" font-size="9.7" fill="#fff" text-anchor="end">116.0</text>
<text x="1041.3" y="710" font-family="Liberation Mono" font-size="9.7" fill="#fff" text-anchor="end">20.00</text>
<text x="767" y="726" font-family="Liberation Mono" font-size="9.7" fill="#fff">TPS:</text>
<text x="897.5" y="726" font-family="Liberation Mono" font-size="9.7" fill="#fff" text-anchor="end">0</text>
<text x="945" y="726" font-family="Liberation Mono" font-size="9.7" fill="#fff" text-anchor="end">0</text>
<text x="993.2" y="726" font-family="Liberation Mono" font-size="9.7" fill="#fff" text-anchor="end">0</text>
<text x="1041.3" y="726" font-family="Liberation Mono" font-size="9.7" fill="#fff" text-anchor="end">0</text>
</svg>
<div class="a" style="left:800px;top:790px;width:21px;height:21px;background:#e2e2e2 repeating-linear-gradient(135deg,#e6e6e6 0 1px,#dddddd 1px 2px)"></div>
<div class="a" style="left:822px;top:790px;width:21px;height:21px;background:#e2e2e2 repeating-linear-gradient(135deg,#e6e6e6 0 1px,#dddddd 1px 2px)"></div>
<div class="a" style="left:844px;top:790px;width:21px;height:21px;background:#e2e2e2 repeating-linear-gradient(135deg,#e6e6e6 0 1px,#dddddd 1px 2px)"></div>
<div class="a" style="left:888px;top:790px;width:21px;height:21px;background:#e2e2e2 repeating-linear-gradient(135deg,#e6e6e6 0 1px,#dddddd 1px 2px)"></div>
<div class="a" style="left:910px;top:790px;width:21px;height:21px;background:#e2e2e2 repeating-linear-gradient(135deg,#e6e6e6 0 1px,#dddddd 1px 2px)"></div>
<div class="a" style="left:932px;top:790px;width:21px;height:21px;background:#e2e2e2 repeating-linear-gradient(135deg,#e6e6e6 0 1px,#dddddd 1px 2px)"></div>
<div class="a" style="left:954px;top:790px;width:21px;height:21px;background:#e2e2e2 repeating-linear-gradient(135deg,#e6e6e6 0 1px,#dddddd 1px 2px)"></div>
<div class="a" style="left:976px;top:790px;width:21px;height:21px;background:#e2e2e2 repeating-linear-gradient(135deg,#e6e6e6 0 1px,#dddddd 1px 2px)"></div>
<div class="a" style="left:998px;top:790px;width:21px;height:21px;background:#e2e2e2 repeating-linear-gradient(135deg,#e6e6e6 0 1px,#dddddd 1px 2px)"></div>
<div class="a" style="left:1020px;top:790px;width:21px;height:21px;background:#e2e2e2 repeating-linear-gradient(135deg,#e6e6e6 0 1px,#dddddd 1px 2px)"></div>
<div class="a" style="left:1042px;top:790px;width:21px;height:21px;background:#e2e2e2 repeating-linear-gradient(135deg,#e6e6e6 0 1px,#dddddd 1px 2px)"></div>
<svg class="a" style="left:0;top:0" width="1064" height="812">
<rect x="806" y="796" width="10" height="10" fill="#000"/>
<rect x="830" y="794" width="2.5" height="13.5" fill="#000"/><rect x="834" y="794" width="2.5" height="13.5" fill="#000"/>
<path d="M849 794.5 L862 801.2 L849 808 Z" fill="#000"/>
<circle cx="901" cy="799.5" r="4.6" fill="none" stroke="#000" stroke-width="1.3"/><rect x="898" y="799" width="6" height="1.3" fill="#000"/><line x1="897.5" y1="803" x2="892" y2="808.5" stroke="#000" stroke-width="1.6"/>
<circle cx="923" cy="799.5" r="4.6" fill="none" stroke="#000" stroke-width="1.3"/><rect x="920" y="799" width="6" height="1.3" fill="#000"/><rect x="922.4" y="796.5" width="1.3" height="6" fill="#000"/><line x1="919.5" y1="803" x2="914" y2="808.5" stroke="#000" stroke-width="1.6"/>
<rect x="937" y="794" width="3" height="13.5" fill="#000"/><path d="M949.5 794 L940 800.8 L949.5 807.5 Z" fill="#000"/>
<path d="M965 796 L958.5 801 L965 806 Z M971.5 796 L965 801 L971.5 806 Z" fill="#000"/>
<rect x="980" y="799.5" width="14.5" height="3" fill="#000"/>
<rect x="1001.5" y="799.5" width="14.5" height="3" fill="#000"/><rect x="1007.3" y="793.8" width="3" height="14.5" fill="#000"/>
<path d="M1024.5 796 L1031 801 L1024.5 806 Z M1031 796 L1037.5 801 L1031 806 Z" fill="#000"/>
<path d="M1047 794 L1056.5 800.8 L1047 807.5 Z" fill="#000"/><rect x="1056" y="794" width="3" height="13.5" fill="#000"/>
</svg>

<svg class="a" style="left:0;top:0" width="1064" height="812" font-family="Liberation Sans"><text x="17.5" y="147.5" font-size="11">Graph 1</text>
<text x="19.5" y="167" font-size="10.9" font-weight="bold" fill="#0a1630">RPM</text>
<text x="17.5" y="255.5" font-size="11">Graph 2</text>
<text x="19.5" y="297" font-size="10.9" font-weight="bold" fill="#0a1630">VE1</text>
<text x="17.5" y="363.5" font-size="11">Graph 3</text>
<text x="19.5" y="449" font-size="10.9" font-weight="bold" fill="#0a1630">AFR</text>
<text x="17.5" y="471.5" font-size="11">Graph 4</text>
<text x="19.5" y="513" font-size="10.9" font-weight="bold" fill="#0a1630">EGO Correction</text>
<text x="19.5" y="535" font-size="10.9" font-weight="bold" fill="#0a1630">TPS</text>
<text x="30.5" y="20" font-size="11.2" fill="#fff">MegaLogViewer HD 4.5.28 - SPD_0040.csv</text>
<text x="5" y="44.5" font-size="11.6" textLength="18" lengthAdjust="spacingAndGlyphs">File</text>
<text x="32" y="44.5" font-size="11.6" textLength="34.25" lengthAdjust="spacingAndGlyphs">Search</text>
<text x="75" y="44.5" font-size="11.6" textLength="24.5" lengthAdjust="spacingAndGlyphs">View</text>
<text x="108" y="44.5" font-size="11.6" textLength="42" lengthAdjust="spacingAndGlyphs">Options</text>
<text x="159" y="44.5" font-size="11.6" textLength="88" lengthAdjust="spacingAndGlyphs">Calculated Fields</text>
<text x="256" y="44.5" font-size="11.6" textLength="43.5" lengthAdjust="spacingAndGlyphs">Log Info</text>
<text x="309.25" y="44.5" font-size="11.6" textLength="24.75" lengthAdjust="spacingAndGlyphs">Help</text>
<rect x="5" y="46" width="6" height="1" fill="#000"/>
<rect x="32" y="46" width="6.5" height="1" fill="#000"/>
<rect x="75" y="46" width="7" height="1" fill="#000"/>
<rect x="108" y="46" width="8" height="1" fill="#000"/>
<rect x="159" y="46" width="7.5" height="1" fill="#000"/>
<rect x="309.25" y="46" width="7.5" height="1" fill="#000"/>
<text x="9.5" y="66.5" font-size="11.5" textLength="55.5" lengthAdjust="spacingAndGlyphs">Log Viewer</text>
<text x="76.25" y="69" font-size="11.5" textLength="97.5" lengthAdjust="spacingAndGlyphs">Ignition Log Viewer</text>
<text x="185.5" y="69" font-size="11.5" textLength="66.5" lengthAdjust="spacingAndGlyphs">Scatter Plots</text>
<text x="264.5" y="69" font-size="11.5" textLength="146.25" lengthAdjust="spacingAndGlyphs">Histogram / Table Generator</text>
<text x="13.75" y="96.7" font-size="11.5" textLength="35" lengthAdjust="spacingAndGlyphs">Default</text>
<text x="61.25" y="98.7" font-size="11.5" textLength="32.5" lengthAdjust="spacingAndGlyphs">Tuning</text>
<text x="68" y="129" font-size="11.7" font-weight="bold" textLength="68.5" lengthAdjust="spacingAndGlyphs">Quick Views</text>
<text x="6" y="776" font-size="11.2" textLength="286.5" lengthAdjust="spacingAndGlyphs">Record 1333 of 4190 - Zoom: 0.63x - Play speed: 100.0%</text></svg>
<div class="a" style="left:0;top:811px;width:1064px;height:1px;background:#7c7c7c"></div>
<div class="a" style="left:0;top:31px;width:1px;height:781px;background:#7c7c7c"></div>
<div class="a" style="left:1063px;top:31px;width:1px;height:781px;background:#7c7c7c"></div>
</body></html>
